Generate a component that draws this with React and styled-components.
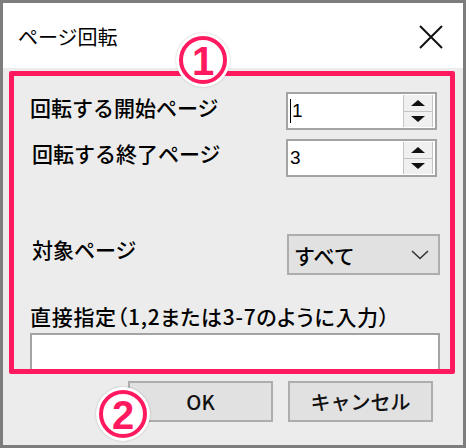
import styled, { createGlobalStyle } from 'styled-components'

const GlobalStyle = createGlobalStyle`
  html, body {
    margin: 0;
    padding: 0;
    background: #ececec;
  }

  body {
    font-family: 'Noto Sans CJK JP', 'Noto Sans', sans-serif;
    color: #111;
  }
`

const PINK = '#ff1a60'

const Window = styled.div`
  position: relative;
  box-sizing: border-box;
  width: 466px;
  height: 448px;
  border: 3px solid #7d7d7d;
  background: #ececec;
  display: flex;
  flex-direction: column;
  overflow: hidden;
`

const TitleBar = styled.div`
  height: 65px;
  flex: none;
  background: #fff;
  display: flex;
  align-items: center;
  justify-content: space-between;
  padding: 2px 20px 0 15px;
  box-sizing: border-box;
`

const Title = styled.span`
  font-size: 20px;
  line-height: 24px;
  color: #000;
`

const Body = styled.div`
  flex: 1;
  display: flex;
  flex-direction: column;
  padding: 3px 8px 0 6px;
`

const Frame = styled.div`
  height: 303px;
  box-sizing: border-box;
  border: 5px solid ${ PINK };
  border-radius: 2px;
  display: flex;
  flex-direction: column;
  padding: 16px 10px 0 16px;
  overflow: hidden;
`

const FieldRow = styled.div`
  display: flex;
  justify-content: space-between;
  align-items: flex-start;
  margin-top: ${ ({ $gap }) => $gap || 0 }px;
`

const Label = styled.span`
  font-size: 21px;
  line-height: 25px;
  font-weight: 500;
  color: #000;
  margin-top: ${ ({ $top }) => $top ?? 3 }px;
  margin-left: ${ ({ $indent }) => $indent || 0 }px;
  white-space: nowrap;
`

const SpinBox = styled.div`
  width: 151px;
  height: 38px;
  box-sizing: border-box;
  margin-right: 3px;
  border: 2px solid #a3a3a3;
  background: #fff;
  display: flex;
`

const SpinValue = styled.div`
  flex: 1;
  display: flex;
  align-items: center;
  padding-left: 2px;
  font-family: 'Liberation Sans', Arial, sans-serif;
  font-size: 19px;
  color: #000;
`

const Caret = styled.span`
  width: 1px;
  height: 24px;
  background: #000;
  margin-right: 1px;
`

const SpinButtons = styled.div`
  width: 28px;
  margin: 1px 2px 1px 0;
  display: flex;
  flex-direction: column;
  border-left: 1px solid #c4c4c4;
  border-right: 1px solid #c4c4c4;
`

const SpinButton = styled.div`
  flex: 1;
  display: flex;
  align-items: center;
  justify-content: center;
  background: #f0f0f0;

  & + & {
    border-top: 1px solid #c4c4c4;
  }
`

const Arrow = styled.span`
  width: 0;
  height: 0;
  border-left: 7px solid transparent;
  border-right: 7px solid transparent;
  ${ ({ $down }) => $down
    ? 'border-top: 6px solid #111;'
    : 'border-bottom: 6px solid #111;' }
`

const Select = styled.div`
  width: 153px;
  height: 41px;
  box-sizing: border-box;
  border: 2px solid #adadad;
  background: #e1e1e1;
  display: flex;
  align-items: center;
  justify-content: space-between;
  padding: 0 9px 0 5px;
  font-size: 21px;
  font-weight: 500;
  color: #000;
`

const Hint = styled.div`
  font-size: 21px;
  line-height: 25px;
  font-weight: 500;
  color: #000;
  margin-top: 29px;
  white-space: nowrap;
  font-feature-settings: 'palt';
  letter-spacing: 0.7px;
`

const TextBox = styled.div`
  flex: 1;
  margin-top: 4px;
  border: 2px solid #a3a3a3;
  border-bottom: none;
  background: #fff;
`

const ButtonBar = styled.div`
  display: flex;
  justify-content: flex-end;
  gap: 15px;
  margin-top: 7px;
  padding-right: 22px;
`

const Button = styled.div`
  width: 145px;
  height: 41px;
  box-sizing: border-box;
  border: 2px solid #adadad;
  background: #e1e1e1;
  display: flex;
  align-items: center;
  justify-content: center;
  font-size: 20px;
  font-weight: 500;
  color: #111;
`

const Badge = styled.div`
  position: absolute;
  left: ${ ({ $x }) => $x }px;
  top: ${ ({ $y }) => $y }px;
  width: 54px;
  height: 54px;
  border-radius: 50%;
  background: #fff;
  box-shadow: 0 0 2px rgba(0, 0, 0, 0.25);
  display: flex;
  align-items: center;
  justify-content: center;
`

const BadgeRing = styled.div`
  width: 48px;
  height: 48px;
  box-sizing: border-box;
  border-radius: 50%;
  border: 4px solid ${ PINK };
  background: #fff;
  display: flex;
  align-items: center;
  justify-content: center;
  color: ${ PINK };
  font-family: 'Liberation Sans', Arial, sans-serif;
  font-weight: 700;
  font-size: 40px;
  line-height: 1;
  padding-top: 1px;
`

const CloseIcon = () => (
  <svg width='24' height='24' viewBox='0 0 24 24'>
    <path d='M1 1 L23 23 M23 1 L1 23' stroke='#111' strokeWidth='2' fill='none' />
  </svg>
)

const Chevron = () => (
  <svg width='18' height='10' viewBox='0 0 18 10'>
    <path d='M1 1 L9 8.5 L17 1' stroke='#333' strokeWidth='1.6' fill='none' />
  </svg>
)

const Spinner = ({ value, caret }) => (
  <SpinBox>
    <SpinValue>
      { caret && <Caret /> }
      { value }
    </SpinValue>
    <SpinButtons>
      <SpinButton><Arrow /></SpinButton>
      <SpinButton><Arrow $down /></SpinButton>
    </SpinButtons>
  </SpinBox>
)

const App = () => (
  <>
    <GlobalStyle />
    <Window>
      <TitleBar>
        <Title>ページ回転</Title>
        <CloseIcon />
      </TitleBar>

      <Body>
        <Frame>
          <FieldRow>
            <Label>回転する開始ページ</Label>
            <Spinner value='1' caret />
          </FieldRow>

          <FieldRow $gap={ 9 }>
            <Label $top={ 2 } $indent={ 2 }>回転する終了ページ</Label>
            <Spinner value='3' />
          </FieldRow>

          <FieldRow $gap={ 57 }>
            <Label $indent={ 2 }>対象ページ</Label>
            <Select>
              すべて
              <Chevron />
            </Select>
          </FieldRow>

          <Hint>直接指定（1,2または3-7のように入力）</Hint>
          <TextBox />
        </Frame>

        <ButtonBar>
          <Button>OK</Button>
          <Button>キャンセル</Button>
        </ButtonBar>
      </Body>

      <Badge $x={ 173 } $y={ 30 }>
        <BadgeRing>1</BadgeRing>
      </Badge>
      <Badge $x={ 93 } $y={ 384 }>
        <BadgeRing>2</BadgeRing>
      </Badge>
    </Window>
  </>
)

export default App
